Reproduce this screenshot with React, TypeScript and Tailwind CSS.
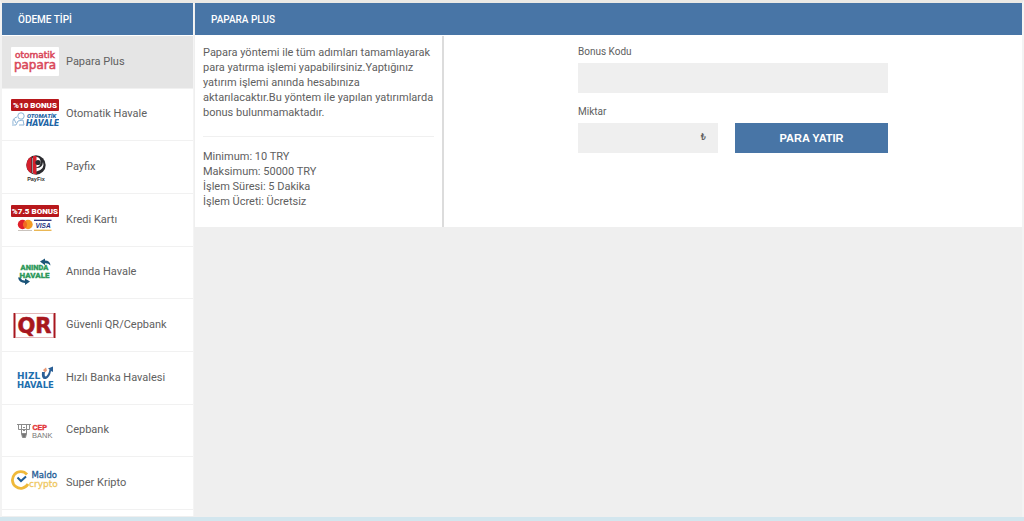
import { useState, type ReactNode } from 'react'
import clsx from 'clsx'

function Logo({ children }: { children: ReactNode }) {
  return (
    <svg viewBox="0 0 48 30" className="h-[30px] w-12 shrink-0" aria-hidden="true">
      {children}
    </svg>
  )
}

function PaparaLogo() {
  return (
    <Logo>
      <rect width="48" height="29" rx="1" fill="#fff" />
      <g fill="#d9485a" stroke="#d9485a" strokeWidth=".5" fontFamily="'DejaVu Sans', sans-serif" textAnchor="middle">
        <text x="24" y="11" fontSize="9">otomatik</text>
        <text x="24" y="22" fontSize="12">papara</text>
      </g>
    </Logo>
  )
}

function BonusBanner({ label }: { label: string }) {
  return (
    <>
      <rect width="48" height="12" rx="1" fill="#b8181c" />
      <text
        x="24"
        y="9"
        fill="#fff"
        fontFamily="Roboto, sans-serif"
        fontSize="8"
        fontWeight="900"
        textAnchor="middle"
      >
        {label}
      </text>
    </>
  )
}

function OtomatikHavaleLogo() {
  return (
    <Logo>
      <BonusBanner label="%10 BONUS" />
      <g fill="none" stroke="#8db4d6" strokeWidth="1">
        <circle cx="10" cy="17" r="3.2" />
        <path d="M2 25q-1-6 4-7M1 26h4l2-4 5-1 1 5H8M3 20l2 4" />
      </g>
      <g
        fill="#1d64a5"
        fontFamily="Roboto, sans-serif"
        fontWeight="900"
        fontStyle="italic"
      >
        <text x="16" y="18.5" fontSize="6">OTOMATİK</text>
        <text x="15" y="27" fontSize="9">HAVALE</text>
      </g>
    </Logo>
  )
}

function PayfixLogo() {
  return (
    <Logo>
      <circle cx="25" cy="13" r="9.7" fill="#2b2b2f" />
      <path d="M20.5 4.5a9.7 9.7 0 0 0 0 17z" fill="#d61f2c" />
      <path d="M22.5 5.5q6-2 7 3.5t-5 6.5v7l-3-1.5V6z" fill="#fff" />
      <path d="M22 4h3.5v18.5l-3.5-1z" fill="#d61f2c" />
      <path d="M25.5 16q6 0 6.5-6 2.5 7-6.5 9.5z" fill="#fff" />
      <circle cx="27" cy="10.5" r="2.6" fill="#2b2b2f" />
      <text
        x="25"
        y="29"
        fill="#333"
        fontFamily="'Liberation Sans', sans-serif"
        fontSize="5.5"
        fontWeight="700"
        textAnchor="middle"
      >
        PayFix
      </text>
    </Logo>
  )
}

function KrediKartiLogo() {
  return (
    <Logo>
      <BonusBanner label="%7.5 BONUS" />
      <circle cx="11.5" cy="19.5" r="4.7" fill="#e0202a" />
      <circle cx="17" cy="19.5" r="4.7" fill="#f59a22" />
      <path d="M14.2 15.7a4.7 4.7 0 0 1 0 7.6 4.7 4.7 0 0 1 0-7.6z" fill="#f26a22" />
      <path d="M7 25.5h14" stroke="#c9c3bd" strokeWidth="1" />
      <path d="M23 15.3h17.5" stroke="#27327f" strokeWidth="1.3" />
      <path d="M23 25.3h17.5" stroke="#e9b44c" strokeWidth="1.3" />
      <text
        x="32"
        y="23"
        fill="#27327f"
        fontFamily="'Liberation Sans', sans-serif"
        fontSize="6.5"
        fontWeight="700"
        fontStyle="italic"
        textAnchor="middle"
      >
        VISA
      </text>
    </Logo>
  )
}

function AnindaHavaleLogo() {
  return (
    <Logo>
      <g
        fill="#2f9a5c"
        stroke="#2f9a5c"
        strokeWidth=".3"
        fontFamily="Roboto, sans-serif"
        fontWeight="900"
        textAnchor="middle"
      >
        <text x="23.5" y="13" fontSize="7.5">ANINDA</text>
        <text x="23.5" y="20.5" fontSize="8">HAVALE</text>
      </g>
      <g fill="#1b5478">
        <path d="M29 4.5l5-3v2q5 0 5.5 5-2-2.5-5.5-2.3v2z" />
        <path d="M19 24.500l-5-3v2q-3 .5-5-3H7q1 5 7 5.500v2z" />
      </g>
    </Logo>
  )
}

function QrLogo() {
  return (
    <Logo>
      <g fill="none" stroke="#a8161e">
        <path d="M3.5 3v25M43.5 3v25" strokeWidth="2" />
        <path d="M5 3.5h37M5 27.5h37" stroke="#e3b8ba" strokeWidth="1" />
      </g>
      <text
        x="23.5"
        y="23"
        fill="#a8161e"
        stroke="#a8161e"
        strokeWidth=".6"
        fontFamily="'DejaVu Sans', sans-serif"
        fontSize="21"
        fontWeight="700"
        textAnchor="middle"
      >
        QR
      </text>
    </Logo>
  )
}

function HizliHavaleLogo() {
  return (
    <Logo>
      <g fill="#1e6fae" fontFamily="'DejaVu Sans', sans-serif" fontWeight="700">
        <text x="6" y="15.5" fontSize="9">HIZL</text>
        <text x="6" y="25" fontSize="8.5">HAVALE</text>
      </g>
      <path d="M31 9q-1 8 4 7 4-2 5-8l2 1V3.5l-5 2 1.5 1q-1 5-3.5 7-2 0-1-4.5z" fill="#2a5f96" />
      <path d="M32 7l3-2.5 1 3-2 2z" fill="#e79a78" />
    </Logo>
  )
}

function CepbankLogo() {
  return (
    <Logo>
      <g fill="none" stroke="#8c8c8c" strokeWidth="1">
        <path d="M6 9.5h14M7.5 9.5v5h11v-5M10.5 10v9h5v-9" />
        <path d="M12 12.5h2M12 15.5h2" />
        <path d="M10.5 18.5h5l-1 4h-3z" fill="#777" />
      </g>
      <text
        x="21.5"
        y="14.5"
        fill="#e23338"
        stroke="#e23338"
        strokeWidth=".4"
        fontFamily="'Liberation Sans', sans-serif"
        fontSize="7"
        fontWeight="700"
      >
        CEP
      </text>
      <text
        x="21"
        y="23"
        fill="#777"
        fontFamily="'Liberation Sans', sans-serif"
        fontSize="7.5"
      >
        BANK
      </text>
    </Logo>
  )
}

function MaldoLogo() {
  return (
    <Logo>
      <path
        d="M16 6.5A8.3 8.3 0 1 0 17 16"
        fill="none"
        stroke="#efb93a"
        strokeWidth="2.8"
      />
      <path d="M6.5 9.5l3.5 3.5 5-4.5" fill="none" stroke="#1f5d96" strokeWidth="2" />
      <g fontFamily="'DejaVu Sans', sans-serif" strokeWidth=".3">
        <text x="20.5" y="10" fill="#1f5d96" stroke="#1f5d96" fontSize="8.5">Maldo</text>
        <text x="18" y="18.5" fill="#efc75e" stroke="#efc75e" fontSize="9">crypto</text>
      </g>
    </Logo>
  )
}

const methods = [
  { name: 'Papara Plus', logo: PaparaLogo },
  { name: 'Otomatik Havale', logo: OtomatikHavaleLogo },
  { name: 'Payfix', logo: PayfixLogo },
  { name: 'Kredi Kartı', logo: KrediKartiLogo },
  { name: 'Anında Havale', logo: AnindaHavaleLogo },
  { name: 'Güvenli QR/Cepbank', logo: QrLogo },
  { name: 'Hızlı Banka Havalesi', logo: HizliHavaleLogo },
  { name: 'Cepbank', logo: CepbankLogo },
  { name: 'Super Kripto', logo: MaldoLogo },
]

const details = [
  'Minimum: 10 TRY',
  'Maksimum: 50000 TRY',
  'İşlem Süresi: 5 Dakika',
  'İşlem Ücreti: Ücretsiz',
]

function PanelTitle({ children }: { children: ReactNode }) {
  return (
    <h2 className="flex h-8 shrink-0 items-center bg-[#4875a6] px-4 text-[10px] font-medium text-white">
      {children}
    </h2>
  )
}

function MethodList() {
  const [selected, setSelected] = useState('Papara Plus')

  return (
    <nav className="flex w-48 shrink-0 flex-col border-r border-[#f4f4f4] bg-white">
      <PanelTitle>ÖDEME TİPİ</PanelTitle>
      <ul className="mt-px grid grow auto-rows-fr pb-1.5">
        {methods.map(({ name, logo: MethodLogo }) => (
          <li key={name} className="border-b border-[#f1f1f1]">
            <button
              type="button"
              onClick={() => setSelected(name)}
              className={clsx(
                'flex h-full w-full items-center gap-[7px] px-[9px] text-left text-[11px]',
                name === selected && 'bg-[#e5e5e5]',
              )}
            >
              <MethodLogo />
              <span>{name}</span>
            </button>
          </li>
        ))}
      </ul>
    </nav>
  )
}

function DepositForm() {
  return (
    <form className="mx-auto w-[310px] pt-2" onSubmit={(e) => e.preventDefault()}>
      <label htmlFor="bonus" className="block text-[10px] leading-4">
        Bonus Kodu
      </label>
      <input id="bonus" type="text" className="mt-[3px] block h-[30px] w-full bg-[#efefef] px-3 text-[11px] outline-none" />
      <label htmlFor="amount" className="mt-[11px] block text-[10px] leading-4">
        Miktar
      </label>
      <div className="mt-[3px] flex gap-[17px]">
        <div className="flex h-[30px] w-[140px] items-center bg-[#efefef] pr-3">
          <input id="amount" type="text" className="h-full min-w-0 grow bg-transparent pl-3 text-[11px] outline-none" />
          <span className="text-[9px] font-medium">₺</span>
        </div>
        <button
          type="submit"
          className="grow bg-[#4875a6] font-['Liberation_Sans',sans-serif] text-[11px] font-bold text-white"
        >
          PARA YATIR
        </button>
      </div>
    </form>
  )
}

export default function App() {
  return (
    <div className="flex min-h-screen flex-col border-b-4 border-[#d3e6ee] bg-[#efefef] font-[Roboto,sans-serif] text-[#606060]">
      <div className="flex grow gap-px border-x-2 border-t-[3px] border-x-[#f3f3f3] border-t-[#ebe9e5] pb-px">
        <MethodList />
        <main className="min-w-0 grow">
          <PanelTitle>PAPARA PLUS</PanelTitle>
          <div className="flex bg-white pt-px">
            <section className="min-h-[191px] w-[249px] shrink-0 border-r-2 border-[#dcdcdc] px-2 pt-[9px] text-[11px] leading-[15px]">
              <p className="border-b border-[#f0f0f0] pb-4">
                Papara yöntemi ile tüm adımları tamamlayarak para yatırma işlemi
                yapabilirsiniz.Yaptığınız yatırım işlemi anında hesabınıza
                aktarılacaktır.Bu yöntem ile yapılan yatırımlarda bonus
                bulunmamaktadır.
              </p>
              <ul className="pt-3">
                {details.map((line) => (
                  <li key={line}>{line}</li>
                ))}
              </ul>
            </section>
            <div className="grow">
              <DepositForm />
            </div>
          </div>
        </main>
      </div>
    </div>
  )
}
